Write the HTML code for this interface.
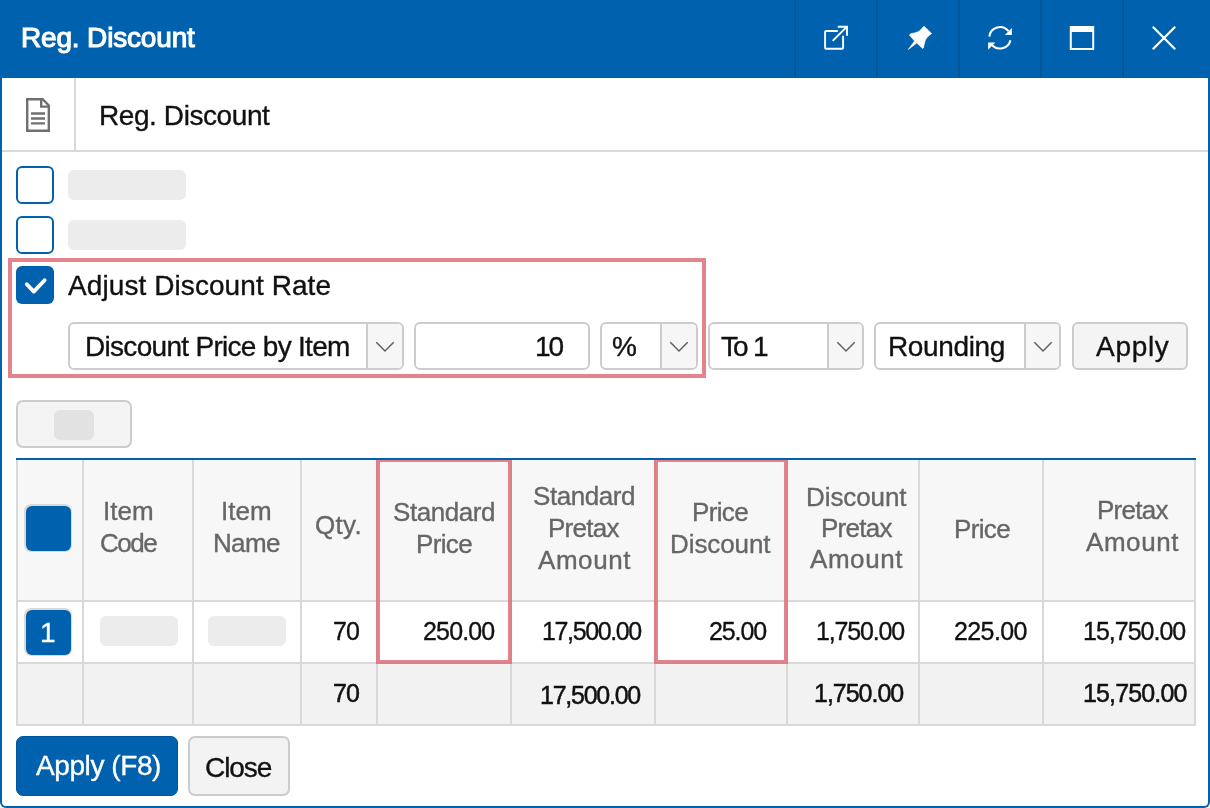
<!DOCTYPE html>
<html><head><meta charset="utf-8"><style>
html,body{margin:0;padding:0;width:1210px;height:808px;overflow:hidden;background:#fff}
body{position:relative;font-family:"Liberation Sans",sans-serif;-webkit-font-smoothing:antialiased}
div,span,svg{position:absolute}
.t{white-space:nowrap;will-change:transform}
</style></head><body>
<div style="left:0px;top:0px;width:1210px;height:78px;background:#0062ae"></div>
<span class="t" style="left:20.50px;top:24.30px;font-size:28px;line-height:28px;letter-spacing:-0.167px;color:#fff;-webkit-text-stroke:1.1px #fff;">Reg. Discount</span>
<div style="left:794px;top:0px;width:2px;height:78px;background:#00569a"></div>
<div style="left:876px;top:0px;width:2px;height:78px;background:#00569a"></div>
<div style="left:958px;top:0px;width:2px;height:78px;background:#00569a"></div>
<div style="left:1040px;top:0px;width:2px;height:78px;background:#00569a"></div>
<div style="left:1122px;top:0px;width:2px;height:78px;background:#00569a"></div>
<div style="left:74px;top:78px;width:2px;height:72px;background:#d9d9d9"></div>
<div style="left:2px;top:150px;width:1206px;height:2px;background:#d9d9d9"></div>
<span class="t" style="left:99.00px;top:102.30px;font-size:28px;line-height:28px;letter-spacing:-0.417px;color:#111;-webkit-text-stroke:0.35px #111;">Reg. Discount</span>
<div style="left:16px;top:166px;width:38px;height:38px;border:2px solid #0062ae;border-radius:6px;box-sizing:border-box;background:#fff"></div>
<div style="left:68px;top:170px;width:118px;height:30px;background:#ececec;border-radius:6px"></div>
<div style="left:16px;top:216px;width:38px;height:38px;border:2px solid #0062ae;border-radius:6px;box-sizing:border-box;background:#fff"></div>
<div style="left:68px;top:220px;width:118px;height:30px;background:#ececec;border-radius:6px"></div>
<div style="left:8px;top:258px;width:698px;height:120px;border:4px solid rgba(222,110,120,0.85);box-sizing:border-box"></div>
<div style="left:16px;top:266px;width:38px;height:38px;background:#0062ae;border-radius:6px"></div>
<span class="t" style="left:68.40px;top:272.30px;font-size:28px;line-height:28px;letter-spacing:0.084px;color:#111;-webkit-text-stroke:0.35px #111;">Adjust Discount Rate</span>
<div style="left:68px;top:322px;width:336px;height:48px;border:2px solid #cccccc;border-radius:6px;box-sizing:border-box;background:#fff;overflow:hidden"></div>
<div style="left:368px;top:324px;width:34px;height:44px;background:#f6f6f6;border-radius:0 4px 4px 0"></div>
<div style="left:366px;top:324px;width:2px;height:44px;background:#cccccc"></div>
<svg style="left:375.3px;top:336px" width="20" height="20" viewBox="0 0 20 20"><path d="M1.3 6.2 L10 15 L18.7 6.2" fill="none" stroke="#606060" stroke-width="1.5"/></svg>
<span class="t" style="left:84.70px;top:332.80px;font-size:28px;line-height:28px;letter-spacing:-0.700px;color:#111;-webkit-text-stroke:0.35px #111;">Discount Price by Item</span>
<div style="left:414px;top:322px;width:176px;height:48px;border:2px solid #cccccc;border-radius:6px;box-sizing:border-box;background:#fff"></div>
<span class="t" style="left:534.75px;top:332.80px;font-size:28px;line-height:28px;letter-spacing:-2.000px;color:#111;-webkit-text-stroke:0.35px #111;">10</span>
<div style="left:600px;top:322px;width:98px;height:48px;border:2px solid #cccccc;border-radius:6px;box-sizing:border-box;background:#fff;overflow:hidden"></div>
<div style="left:662px;top:324px;width:34px;height:44px;background:#f6f6f6;border-radius:0 4px 4px 0"></div>
<div style="left:660px;top:324px;width:2px;height:44px;background:#cccccc"></div>
<svg style="left:669.3px;top:336px" width="20" height="20" viewBox="0 0 20 20"><path d="M1.3 6.2 L10 15 L18.7 6.2" fill="none" stroke="#606060" stroke-width="1.5"/></svg>
<span class="t" style="left:612.30px;top:332.80px;font-size:28px;line-height:28px;letter-spacing:0.000px;color:#111;-webkit-text-stroke:0.35px #111;">%</span>
<div style="left:708px;top:322px;width:156px;height:48px;border:2px solid #cccccc;border-radius:6px;box-sizing:border-box;background:#fff;overflow:hidden"></div>
<div style="left:829px;top:324px;width:33px;height:44px;background:#f6f6f6;border-radius:0 4px 4px 0"></div>
<div style="left:827px;top:324px;width:2px;height:44px;background:#cccccc"></div>
<svg style="left:835.8px;top:336px" width="20" height="20" viewBox="0 0 20 20"><path d="M1.3 6.2 L10 15 L18.7 6.2" fill="none" stroke="#606060" stroke-width="1.5"/></svg>
<span class="t" style="left:720.60px;top:332.80px;font-size:28px;line-height:28px;letter-spacing:-2.000px;color:#111;-webkit-text-stroke:0.35px #111;">To</span>
<span class="t" style="left:753.00px;top:332.80px;font-size:28px;line-height:28px;letter-spacing:0.000px;color:#111;-webkit-text-stroke:0.35px #111;">1</span>
<div style="left:874px;top:322px;width:187px;height:48px;border:2px solid #cccccc;border-radius:6px;box-sizing:border-box;background:#fff;overflow:hidden"></div>
<div style="left:1026px;top:324px;width:33px;height:44px;background:#f6f6f6;border-radius:0 4px 4px 0"></div>
<div style="left:1024px;top:324px;width:2px;height:44px;background:#cccccc"></div>
<svg style="left:1032.8px;top:336px" width="20" height="20" viewBox="0 0 20 20"><path d="M1.3 6.2 L10 15 L18.7 6.2" fill="none" stroke="#606060" stroke-width="1.5"/></svg>
<span class="t" style="left:887.50px;top:332.80px;font-size:28px;line-height:28px;letter-spacing:-0.357px;color:#111;-webkit-text-stroke:0.35px #111;">Rounding</span>
<div style="left:1072px;top:322px;width:116px;height:48px;border:2px solid #cccccc;border-radius:6px;box-sizing:border-box;background:#f4f4f4"></div>
<span class="t" style="left:1096.20px;top:332.80px;font-size:28px;line-height:28px;letter-spacing:0.700px;color:#111;-webkit-text-stroke:0.35px #111;">Apply</span>
<div style="left:16px;top:400px;width:116px;height:48px;border:2px solid #cccccc;border-radius:7px;box-sizing:border-box;background:#f4f4f4"></div>
<div style="left:54px;top:410px;width:40px;height:30px;background:#e2e2e2;border-radius:6px"></div>
<div style="left:16px;top:460px;width:1180px;height:140px;background:#f7f7f7"></div>
<div style="left:16px;top:602px;width:1180px;height:60px;background:#fff"></div>
<div style="left:16px;top:664px;width:1180px;height:60px;background:#f2f2f2"></div>
<div style="left:16px;top:458px;width:1180px;height:2px;background:#0062ae"></div>
<div style="left:16px;top:460px;width:2px;height:266px;background:#d9d9d9"></div>
<div style="left:82px;top:460px;width:2px;height:266px;background:#d9d9d9"></div>
<div style="left:192px;top:460px;width:2px;height:266px;background:#d9d9d9"></div>
<div style="left:300px;top:460px;width:2px;height:266px;background:#d9d9d9"></div>
<div style="left:376px;top:460px;width:2px;height:266px;background:#d9d9d9"></div>
<div style="left:510px;top:460px;width:2px;height:266px;background:#d9d9d9"></div>
<div style="left:654px;top:460px;width:2px;height:266px;background:#d9d9d9"></div>
<div style="left:786px;top:460px;width:2px;height:266px;background:#d9d9d9"></div>
<div style="left:918px;top:460px;width:2px;height:266px;background:#d9d9d9"></div>
<div style="left:1042px;top:460px;width:2px;height:266px;background:#d9d9d9"></div>
<div style="left:1194px;top:460px;width:2px;height:266px;background:#d9d9d9"></div>
<div style="left:16px;top:600px;width:1180px;height:2px;background:#d9d9d9"></div>
<div style="left:16px;top:662px;width:1180px;height:2px;background:#d9d9d9"></div>
<div style="left:16px;top:724px;width:1180px;height:2px;background:#d9d9d9"></div>
<span class="t" style="left:102.80px;top:497.99px;font-size:26px;line-height:26px;letter-spacing:0.000px;color:#666;-webkit-text-stroke:0.35px #666;">Item</span>
<span class="t" style="left:99.50px;top:529.99px;font-size:26px;line-height:26px;letter-spacing:-1.467px;color:#666;-webkit-text-stroke:0.35px #666;">Code</span>
<span class="t" style="left:221.00px;top:497.99px;font-size:26px;line-height:26px;letter-spacing:0.000px;color:#666;-webkit-text-stroke:0.35px #666;">Item</span>
<span class="t" style="left:213.00px;top:529.99px;font-size:26px;line-height:26px;letter-spacing:-0.667px;color:#666;-webkit-text-stroke:0.35px #666;">Name</span>
<span class="t" style="left:314.90px;top:511.99px;font-size:26px;line-height:26px;letter-spacing:0.333px;color:#666;-webkit-text-stroke:0.35px #666;">Qty.</span>
<span class="t" style="left:393.30px;top:499.39px;font-size:26px;line-height:26px;letter-spacing:-0.429px;color:#666;-webkit-text-stroke:0.35px #666;">Standard</span>
<span class="t" style="left:416.10px;top:531.29px;font-size:26px;line-height:26px;letter-spacing:-0.650px;color:#666;-webkit-text-stroke:0.35px #666;">Price</span>
<span class="t" style="left:533.00px;top:482.99px;font-size:26px;line-height:26px;letter-spacing:-0.429px;color:#666;-webkit-text-stroke:0.35px #666;">Standard</span>
<span class="t" style="left:548.30px;top:514.99px;font-size:26px;line-height:26px;letter-spacing:-0.720px;color:#666;-webkit-text-stroke:0.35px #666;">Pretax</span>
<span class="t" style="left:537.60px;top:546.99px;font-size:26px;line-height:26px;letter-spacing:0.560px;color:#666;-webkit-text-stroke:0.35px #666;">Amount</span>
<span class="t" style="left:692.30px;top:499.39px;font-size:26px;line-height:26px;letter-spacing:-0.650px;color:#666;-webkit-text-stroke:0.35px #666;">Price</span>
<span class="t" style="left:669.80px;top:531.29px;font-size:26px;line-height:26px;letter-spacing:-0.086px;color:#666;-webkit-text-stroke:0.35px #666;">Discount</span>
<span class="t" style="left:805.60px;top:483.59px;font-size:26px;line-height:26px;letter-spacing:-0.086px;color:#666;-webkit-text-stroke:0.35px #666;">Discount</span>
<span class="t" style="left:820.60px;top:514.99px;font-size:26px;line-height:26px;letter-spacing:-0.720px;color:#666;-webkit-text-stroke:0.35px #666;">Pretax</span>
<span class="t" style="left:809.90px;top:546.29px;font-size:26px;line-height:26px;letter-spacing:0.560px;color:#666;-webkit-text-stroke:0.35px #666;">Amount</span>
<span class="t" style="left:953.50px;top:515.99px;font-size:26px;line-height:26px;letter-spacing:-0.650px;color:#666;-webkit-text-stroke:0.35px #666;">Price</span>
<span class="t" style="left:1096.60px;top:497.49px;font-size:26px;line-height:26px;letter-spacing:-0.720px;color:#666;-webkit-text-stroke:0.35px #666;">Pretax</span>
<span class="t" style="left:1085.90px;top:529.29px;font-size:26px;line-height:26px;letter-spacing:0.560px;color:#666;-webkit-text-stroke:0.35px #666;">Amount</span>
<div style="left:24px;top:504px;width:48px;height:48px;background:#dcd9d6;border-radius:7px"></div>
<div style="left:25.5px;top:505.5px;width:45px;height:45px;background:#0062ae;border-radius:6px"></div>
<div style="left:24px;top:608px;width:48px;height:48px;background:#dcd9d6;border-radius:7px"></div>
<div style="left:25.5px;top:609.5px;width:45px;height:45px;background:#0062ae;border-radius:6px"></div>
<span class="t" style="left:40.25px;top:618.80px;font-size:28px;line-height:28px;letter-spacing:0.000px;color:#fff;-webkit-text-stroke:0.35px #fff;">1</span>
<div style="left:100px;top:616px;width:78px;height:30px;background:#ececec;border-radius:6px"></div>
<div style="left:208px;top:616px;width:78px;height:30px;background:#ececec;border-radius:6px"></div>
<span class="t" style="left:333.00px;top:618.84px;font-size:25px;line-height:25px;letter-spacing:-1.000px;color:#111;-webkit-text-stroke:0.35px #111;">70</span>
<span class="t" style="left:422.60px;top:618.84px;font-size:25px;line-height:25px;letter-spacing:-0.840px;color:#111;-webkit-text-stroke:0.35px #111;">250.00</span>
<span class="t" style="left:542.00px;top:618.84px;font-size:25px;line-height:25px;letter-spacing:-1.375px;color:#111;-webkit-text-stroke:0.35px #111;">17,500.00</span>
<span class="t" style="left:708.70px;top:618.84px;font-size:25px;line-height:25px;letter-spacing:-1.100px;color:#111;-webkit-text-stroke:0.35px #111;">25.00</span>
<span class="t" style="left:815.50px;top:618.84px;font-size:25px;line-height:25px;letter-spacing:-1.157px;color:#111;-webkit-text-stroke:0.35px #111;">1,750.00</span>
<span class="t" style="left:954.00px;top:618.84px;font-size:25px;line-height:25px;letter-spacing:-0.600px;color:#111;-webkit-text-stroke:0.35px #111;">225.00</span>
<span class="t" style="left:1082.80px;top:618.84px;font-size:25px;line-height:25px;letter-spacing:-1.000px;color:#111;-webkit-text-stroke:0.35px #111;">15,750.00</span>
<span class="t" style="left:333.00px;top:680.84px;font-size:25px;line-height:25px;letter-spacing:-1.000px;color:#111;-webkit-text-stroke:0.5px #111;">70</span>
<span class="t" style="left:540.00px;top:682.84px;font-size:25px;line-height:25px;letter-spacing:-1.250px;color:#111;-webkit-text-stroke:0.5px #111;">17,500.00</span>
<span class="t" style="left:813.80px;top:680.84px;font-size:25px;line-height:25px;letter-spacing:-1.014px;color:#111;-webkit-text-stroke:0.5px #111;">1,750.00</span>
<span class="t" style="left:1082.80px;top:680.84px;font-size:25px;line-height:25px;letter-spacing:-0.862px;color:#111;-webkit-text-stroke:0.5px #111;">15,750.00</span>
<div style="left:376px;top:460px;width:136px;height:204px;border:4px solid rgba(222,110,120,0.85);border-top-width:2px;box-sizing:border-box"></div>
<div style="left:654px;top:460px;width:134px;height:204px;border:4px solid rgba(222,110,120,0.85);border-top-width:2px;box-sizing:border-box"></div>
<div style="left:16px;top:736px;width:162px;height:60px;background:#0062ae;border:1px solid #00569c;box-sizing:border-box;border-radius:7px"></div>
<span class="t" style="left:35.70px;top:751.80px;font-size:28px;line-height:28px;letter-spacing:-0.411px;color:#fff;-webkit-text-stroke:0.35px #fff;">Apply (F8)</span>
<div style="left:188px;top:736px;width:102px;height:60px;border:2px solid #cccccc;border-radius:7px;box-sizing:border-box;background:#f3f3f3"></div>
<span class="t" style="left:205.00px;top:753.80px;font-size:28px;line-height:28px;letter-spacing:-1.075px;color:#111;-webkit-text-stroke:0.35px #111;">Close</span>

<svg style="left:0;top:0" width="1210" height="808" viewBox="0 0 1210 808">
 <!-- external link -->
 <g fill="none" stroke="#fff" stroke-width="1.9">
  <path d="M837.8 31 H826.1 Q825.1 31 825.1 32 V47.7 Q825.1 48.7 826.1 48.7 H842.1 Q843.1 48.7 843.1 47.7 V35.8"/>
  <path d="M832.7 40.9 L846.2 27.4"/>
  <path d="M837.8 26.8 H847 V35.8"/>
 </g>
 <!-- pin -->
 <path fill="#fff" stroke="#fff" stroke-width="0.6" stroke-linejoin="round" d="M924.3 26.4 L931.7 33.6 C929 35.4 926.6 37.4 925.3 40.4 C924.4 42.8 924 45.6 923.4 47.9 L922.6 48.5 L916.8 43 L908.2 49.6 L914.6 41 L909.5 35.3 L910.5 33.8 C913.6 33.2 917 32.6 919.6 30.8 C921.5 29.3 922.6 27.4 923.6 26.5 Z"/>
 <!-- refresh -->
 <g fill="none" stroke="#fff" stroke-width="2.1">
  <path d="M989.36 36.68 A10.7 10.7 0 0 1 1008.43 31.21"/>
  <path d="M1010.43 40.21 A10.7 10.7 0 0 1 991.57 44.39"/>
 </g>
 <path fill="#fff" d="M1011.9 27.9 V35 H1004.9 Z"/>
 <path fill="#fff" d="M988.1 49.8 V42.4 H995.3 Z"/>
 <!-- maximize -->
 <rect x="1070.8" y="27" width="22.4" height="22" fill="none" stroke="#fff" stroke-width="2"/>
 <rect x="1070" y="26" width="24" height="6" fill="#fff"/>
 <!-- close -->
 <path d="M1152.8 26.8 L1175.2 49.2 M1175.2 26.8 L1152.8 49.2" stroke="#fff" stroke-width="2.2" fill="none"/>
 <!-- doc icon -->
 <g fill="none" stroke="#707070" stroke-width="2.4">
  <path d="M27.2 99.2 H42.6 L48.8 105.4 V130.8 H27.2 Z"/>
  <path d="M41.2 99.4 V106.6 H48.6"/>
 </g>
 <g stroke="#707070" stroke-width="2.3">
  <path d="M31 113.5 H45 M31 118.5 H45 M31 123.4 H45"/>
 </g>
</svg>
<svg style="left:16px;top:266px" width="38" height="38" viewBox="0 0 38 38"><path d="M10.8 18.2 L17.8 25.6 L28.6 14.2" fill="none" stroke="#fff" stroke-width="3.8" stroke-linecap="round" stroke-linejoin="round"/></svg>
<div style="left:0;top:78px;width:1210px;height:730px;border:2px solid #0062ae;border-top:none;box-sizing:border-box;border-radius:0 0 6px 6px"></div>
</body></html>
